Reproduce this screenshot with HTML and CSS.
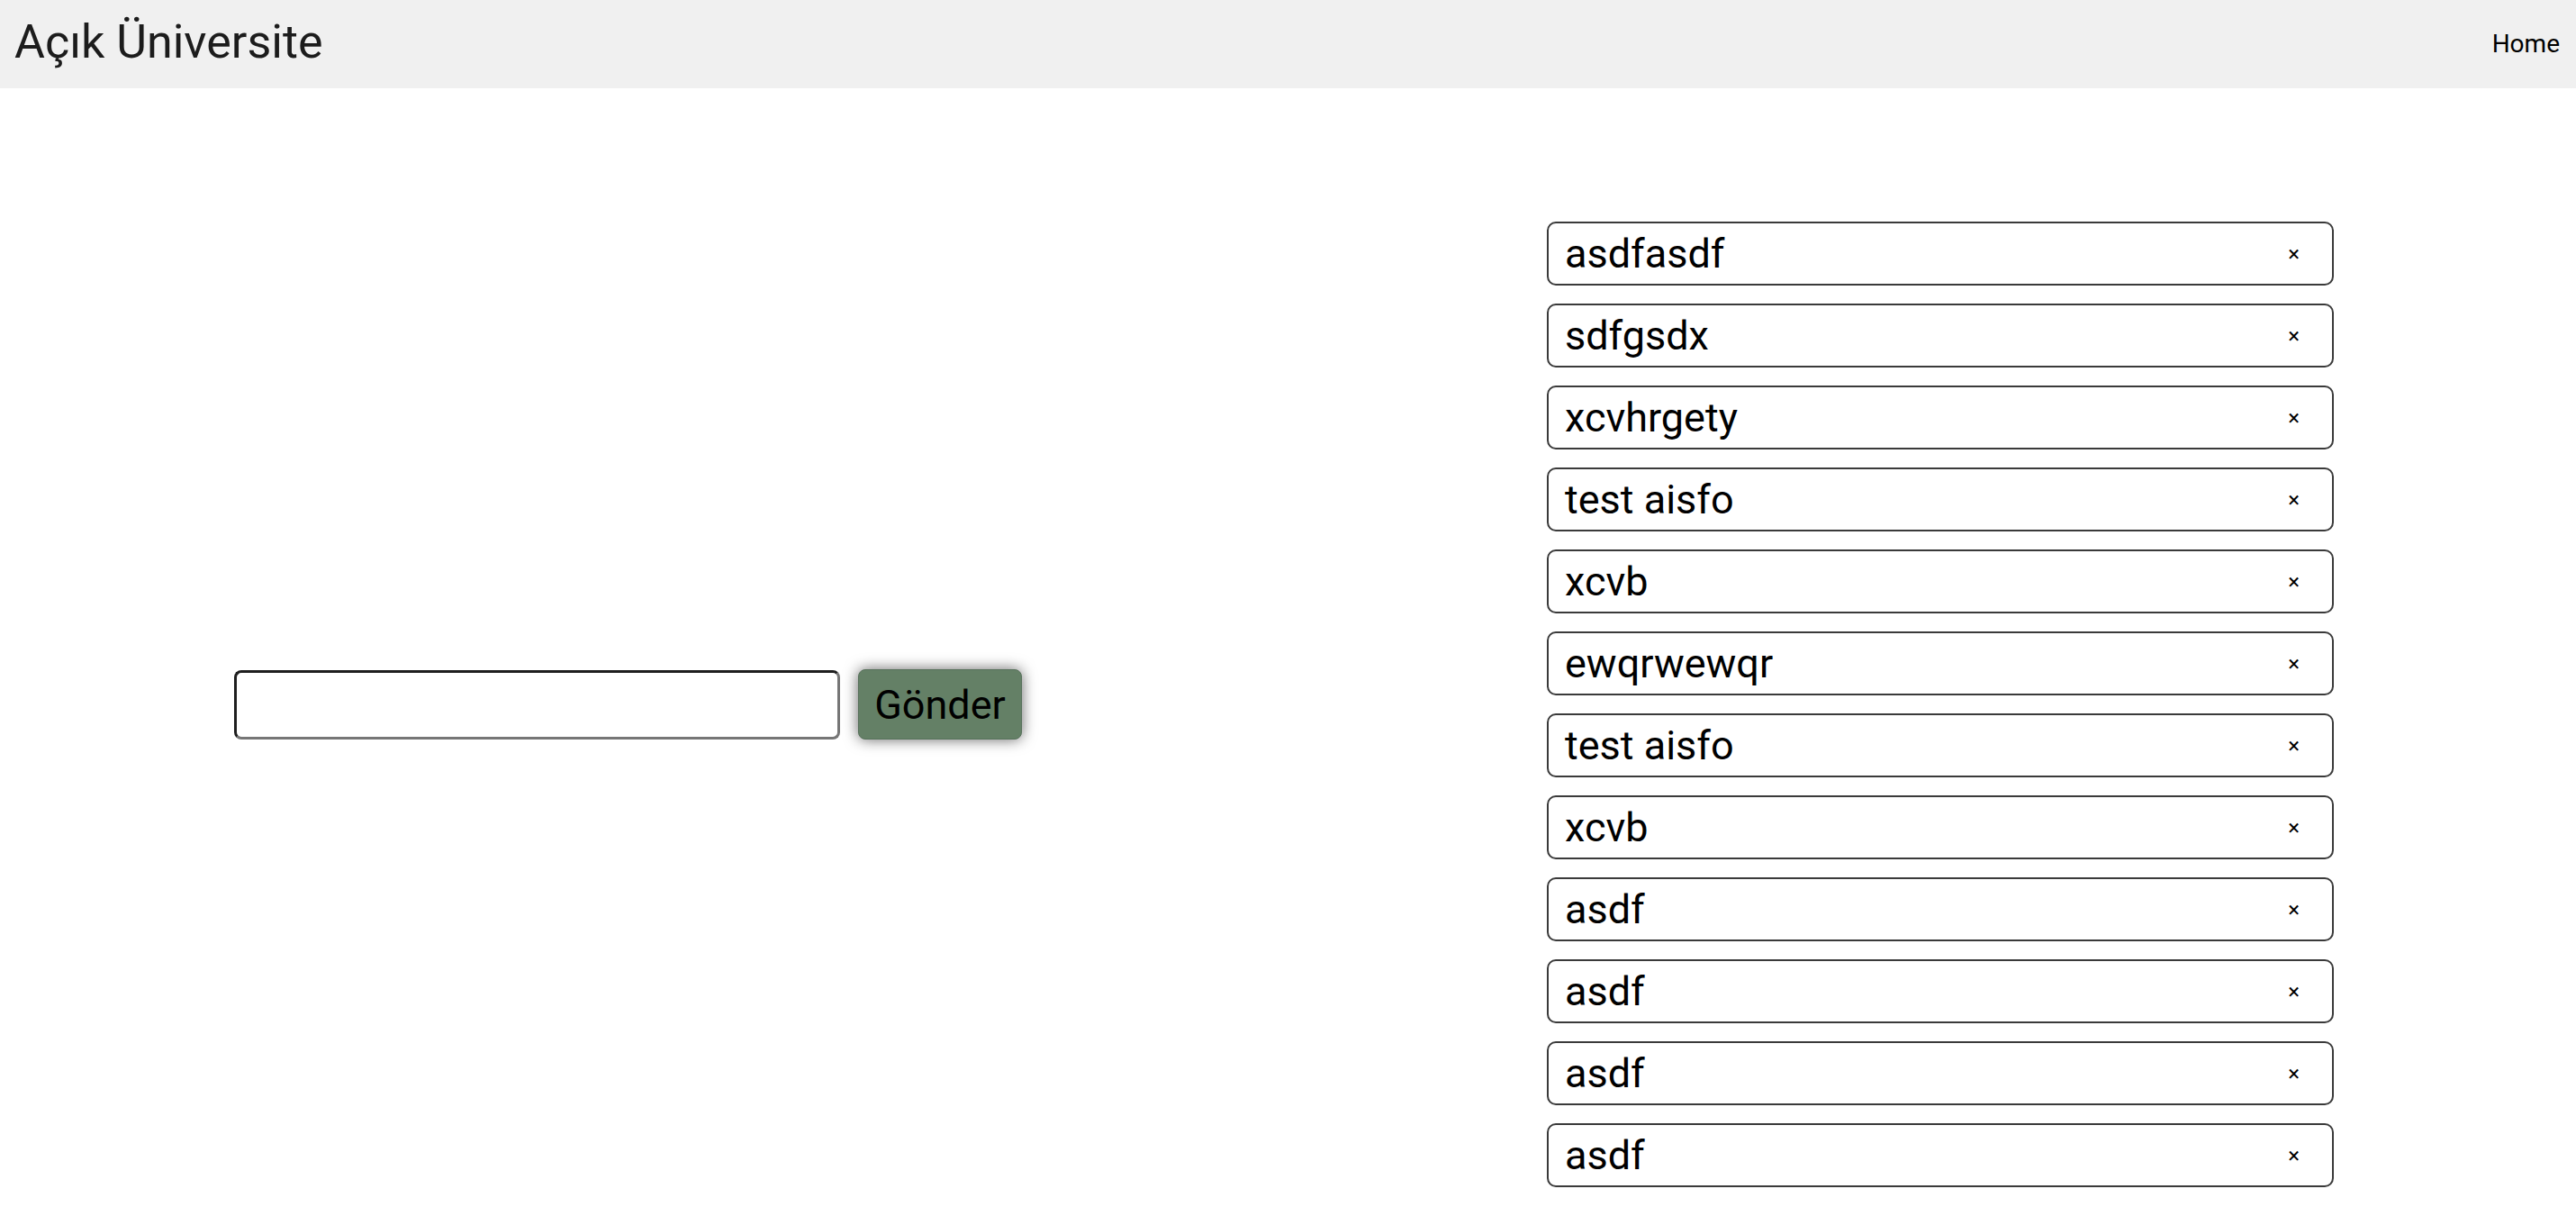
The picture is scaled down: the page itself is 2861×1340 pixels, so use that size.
FILE: index.html
```html
<!DOCTYPE html>
<html lang="tr">
<head>
<meta charset="utf-8">
<title>Açık Üniversite</title>
<link rel="stylesheet" href="styles.css">
</head>
<body>
<header class="topbar">
  <div class="brand">Açık Üniversite</div>
  <nav class="nav"><a class="nav-link" href="#">Home</a></nav>
</header>
<main class="content">
  <section class="form-col">
    <form class="form">
      <input class="text-input" type="text">
      <button class="send-btn" type="button">Gönder</button>
    </form>
  </section>
  <section class="list-col">
    <ul class="items">
      <li class="item"><span class="item-text">asdfasdf</span><span class="item-close">×</span></li>
      <li class="item"><span class="item-text">sdfgsdx</span><span class="item-close">×</span></li>
      <li class="item"><span class="item-text">xcvhrgety</span><span class="item-close">×</span></li>
      <li class="item"><span class="item-text">test aisfo</span><span class="item-close">×</span></li>
      <li class="item"><span class="item-text">xcvb</span><span class="item-close">×</span></li>
      <li class="item"><span class="item-text">ewqrwewqr</span><span class="item-close">×</span></li>
      <li class="item"><span class="item-text">test aisfo</span><span class="item-close">×</span></li>
      <li class="item"><span class="item-text">xcvb</span><span class="item-close">×</span></li>
      <li class="item"><span class="item-text">asdf</span><span class="item-close">×</span></li>
      <li class="item"><span class="item-text">asdf</span><span class="item-close">×</span></li>
      <li class="item"><span class="item-text">asdf</span><span class="item-close">×</span></li>
      <li class="item"><span class="item-text">asdf</span><span class="item-close">×</span></li>
    </ul>
  </section>
</main>
</body>
</html>
```
FILE: styles.css
```css
html, body {
  margin: 0;
  padding: 0;
  background: #ffffff;
  font-family: Roboto, "Liberation Sans", Arial, sans-serif;
  color: #000;
}

.topbar {
  height: 98px;
  background: #f0f0f0;
  display: flex;
  align-items: center;
  justify-content: space-between;
  padding: 0 18px 0 16px;
  box-sizing: border-box;
}

.brand {
  font-size: 52px;
  font-weight: 400;
  color: #1c1c1c;
  line-height: 1;
  margin-top: -4px;
}

.nav-link {
  font-size: 28px;
  color: #000;
  text-decoration: none;
  line-height: 1;
}

.content {
  display: flex;
  padding-top: 148px;
}

.form-col {
  flex: 0 0 1718px;
  box-sizing: border-box;
  padding-left: 260px;
  display: flex;
  align-items: center;
}

.form {
  display: flex;
  align-items: center;
  gap: 20px;
  margin: 0;
}

.text-input {
  width: 673px;
  height: 77px;
  box-sizing: border-box;
  border-width: 3px;
  border-style: solid;
  border-color: #1e1e1e #767676 #767676 #1e1e1e;
  border-radius: 8px;
  background: #fff;
  padding: 0 10px;
  font-size: 40px;
  font-family: Roboto, sans-serif;
}

.send-btn {
  width: 182px;
  height: 78px;
  box-sizing: border-box;
  background: #648066;
  border: 1px solid #56705a;
  border-radius: 8px;
  box-shadow: 0 0 16px rgba(0, 0, 0, 0.6);
  font-family: Roboto, sans-serif;
  font-size: 45px;
  color: #000;
  padding: 0;
}

.list-col {
  flex: 0 0 874px;
}

.items {
  list-style: none;
  margin: 0;
  padding: 0;
  display: flex;
  flex-direction: column;
  gap: 20px;
}

.item {
  height: 71px;
  box-sizing: border-box;
  border: 2px solid #3a3a3a;
  border-radius: 10px;
  display: flex;
  align-items: center;
  justify-content: space-between;
  padding: 0 36px 0 18px;
}

.item-text {
  font-size: 45px;
  line-height: 1;
  color: #000;
}

.item-close {
  font-size: 24px;
  line-height: 1;
  color: #000;
}
```
